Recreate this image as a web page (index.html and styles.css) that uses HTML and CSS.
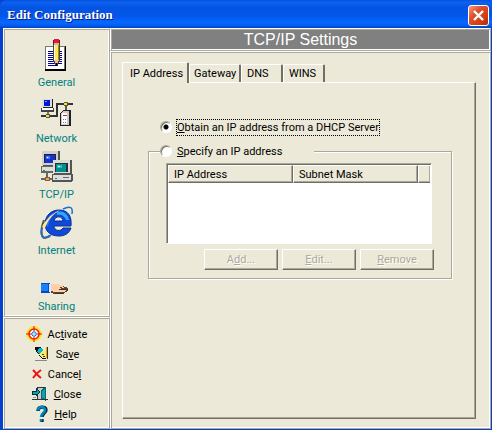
FILE: index.html
```html
<!DOCTYPE html>
<html lang="en">
<head>
<meta charset="utf-8">
<title>Edit Configuration</title>
<link rel="stylesheet" href="styles.css">
</head>
<body>
<div class="window">
  <header class="titlebar">
    <h1>Edit Configuration</h1>
    <button class="close" type="button" aria-label="Close window">
      <svg width="13" height="13" viewBox="0 0 13 13"><path d="M2 2 11 11M11 2 2 11" stroke="#fff" stroke-width="2.4"/></svg>
    </button>
  </header>
  <div class="body">
    <aside class="sidebar">
      <nav class="panel sections">
        <a href="#general">
          <svg width="32" height="32" viewBox="0 0 32 32" shape-rendering="crispEdges">
            <path d="M4 8h21v25H4z" fill="#000"/><path d="M4 8h20v23H4z" fill="#777"/><path d="M5 9h18v22H5z" fill="#fff"/>
            <path d="M7 13.500h14M7 15.500h14M7 17.500h14M7 19.500h14M7 21.500h14M7 23.500h14M7 25.500h14M7 27.500h10" stroke="#0000a8"/>
            <path d="M12 3h7v20l-3 5h-1l-3-5z" fill="#444"/><path d="M13 7h5v15h-5z" fill="#ffe84a"/><path d="M13 7h1v15h-1z" fill="#fff"/><path d="M17 7h1v15h-1z" fill="#a88600"/>
            <path d="M13 1h5v4h-5z" fill="#e21834"/><path d="M12 2h1v4h-1zM18 2h1v4h-1z" fill="#900020"/><path d="M13 5h5v2h-5z" fill="#bbb"/><path d="M13 22h5l-2 4h-1z" fill="#efc09a"/><path d="M15 25h1v3h-1z" fill="#000"/>
          </svg>
          <span>General</span></a>
        <a href="#network">
          <svg width="32" height="32" viewBox="0 0 32 32" shape-rendering="crispEdges">
            <path d="M0 22h16V10h16" fill="none" stroke="#333" stroke-width="1.500"/>
            <path d="M2 5h10v9H2z" fill="#222"/><path d="M1 5h10v8H1z" fill="#ddd"/><path d="M3 6h6v6H3z" fill="#0018d0"/><path d="M4 7h2v1H4z" fill="#78a8ff"/>
            <path d="M0 14h13v4H0z" fill="#444"/><path d="M1 14h11v2H1z" fill="#fff"/><path d="M6 18h2v4H6z" fill="#777"/>
            <path d="M5 20h4v4H5zM23 8h4v4h-4z" fill="#555"/><path d="M5 21h3v2H5zM23 9h3v2h-3z" fill="#ffe600"/>
            <path d="M25 12v6" stroke="#555" stroke-width="2"/>
            <path d="M22 16h8v16H19V19z" fill="#222"/><path d="M22 17h6v14h-8V20z" fill="#ccc"/><path d="M21 19h5v11h-5z" fill="#fff"/><path d="M22 21h4v1h-4z" fill="#e02020"/><path d="M22 25h1v1h-1zM24 25h1v1h-1zM22 28h1v1h-1zM24 28h1v1h-1z" fill="#777"/>
          </svg>
          <span>Network</span></a>
        <a href="#tcpip">
          <svg width="32" height="32" viewBox="0 0 32 32" shape-rendering="crispEdges">
            <path d="M2 1h17v15H2z" fill="#555"/><path d="M1 1h16v14H1z" fill="#d0d0c8"/><path d="M3 4h12v9H3z" fill="#223"/><path d="M4 5h10v8H4z" fill="#1830d0"/><path d="M5 6h4v3H5z" fill="#4080ff"/><path d="M6 7h1v1H6z" fill="#fff"/>
            <path d="M0 16h14v7H0z" fill="#666"/><path d="M1 17h12v4H1z" fill="#ddd"/><path d="M2 20h2v1H2z" fill="#0a0"/>
            <path d="M0 29h13M6 23v7" stroke="#666" stroke-width="2"/><path d="M4 27h5v4H4z" fill="#855"/><path d="M5 28h3v2H5z" fill="#ffb000"/>
            <path d="M13 10h18v14H13z" fill="#555"/><path d="M12 10h17v13H12z" fill="#dcdcd4"/><path d="M14 13h13v9H14z" fill="#233"/><path d="M15 14h10v8H15z" fill="#008e90"/><path d="M16 15h5v3h-5z" fill="#38b8b0"/><path d="M17 16h2v1h-2z" fill="#dff"/>
            <path d="M11 24h21v6l-2 2H11z" fill="#555"/><path d="M12 25h18v5H12z" fill="#ddd"/><path d="M14 28h2v1h-2z" fill="#0a0"/><path d="M22 27h6v1h-6z" fill="#666"/>
          </svg>
          <span>TCP/IP</span></a>
        <a href="#internet">
          <svg width="32" height="32" viewBox="0 0 32 32">
            <path d="M3 14C0 22-1 29 3 32c2 0 4-1 6-2" fill="none" stroke="#555" stroke-width="2"/>
            <path d="M30 20H13c0 5 7 6 9 2h8c-2 6-7 8-12 8C8 30 4 24 4 18 4 10 10 4 18 4c9 0 13 6 12 16zM13 15h9c0-5-8-6-9 0z" fill="#1048d8" stroke="#083098" fill-rule="evenodd"/>
            <path d="M16 6c6-2 11 2 12 8h-3c-1-4-5-6-9-5z" fill="#30a8f8"/><path d="M5 18c0-5 3-8 7-11-2 6-4 7-5 14z" fill="#3078f0"/>
            <path d="M1 21C5 13 13 6 19 4 11 9 7 14 4 22z" fill="#ffec90"/>
            <path d="M22 3c8-4 10-1 9 5M1 22c-2 9 1 12 9 7" fill="none" stroke="#1870d0" stroke-width="1.5"/>
          </svg>
          <span>Internet</span></a>
        <a href="#sharing">
          <svg width="32" height="32" viewBox="0 0 32 32" shape-rendering="crispEdges">
            <path d="M0 21h9v10H0z" fill="#0848c0"/><path d="M0 22h7v7H0z" fill="#1880ff"/>
            <path d="M9 23h5l7 1 6 2v2l-2 2-3 2h-9l-4-2z" fill="#6a4028"/><path d="M9 22h6l6 1 2 3-5-1 3 3 5-1-3 3h-8l-6-1z" fill="#ffd0a8"/>
            <path d="M18 27.500h9M14 31.500h9" stroke="#333"/><path d="M8 22h2v8H8z" fill="#dde8ff"/>
          </svg>
          <span>Sharing</span></a>
      </nav>
      <div class="panel actions">
        <button type="button">
          <svg width="16" height="16" viewBox="0 0 16 16"><circle cx="8" cy="8" r="7.500" fill="#ffe800"/><circle cx="8" cy="8" r="5" fill="#fff" stroke="#f02020" stroke-width="1.6"/><path d="M8 0v16M0 8h16" stroke="#e01010"/><circle cx="8" cy="8" r="2.5" fill="#1878c8"/><path d="M8 6v4M6 8h4" stroke="#fff"/></svg>
          <span>Ac<u>t</u>ivate</span></button>
        <button type="button">
          <svg width="16" height="16" viewBox="0 0 16 16" shape-rendering="crispEdges"><path d="M1 1h5l3 3 3 4v5H8L5 9 2 6z" fill="#111"/><path d="M5 2h2l2 2-4 4-2-2z" fill="#08b8c8"/><path d="M8 5h4v6l1 1H8L5 9z" fill="#ffec60"/><path d="M8 8h2v1H8zM9 10h2v1H9z" fill="#333"/><path d="M12 1h1v11h-1z" fill="#d8a800"/><path d="M13.500 1v12" stroke="#333"/><path d="M1 14.500h12" stroke="#888"/></svg>
          <span>Sa<u>v</u>e</span></button>
        <button type="button">
          <svg width="10" height="16" viewBox="0 0 10 16"><path d="M1 4C4 7 6 10 9 12M9 4C6 6 3 9 1 12" stroke="#f01010" stroke-width="2" fill="none"/></svg>
          <span>Cance<u>l</u></span></button>
        <button type="button">
          <svg width="16" height="16" viewBox="0 0 16 16" shape-rendering="crispEdges"><path d="M5 1h9v13H5z" fill="#333"/><path d="M6 2h6v11H6z" fill="#ccc"/><path d="m9 4 5-3v14l-5-2z" fill="#086878"/><path d="m10 5 3-2v10l-3-1z" fill="#10a0a8"/><path d="M0 5h4V2l4 4-4 4V8H0z" fill="#08a0b8" stroke="#033"/><path d="M0 13.500h16" stroke="#333"/><path d="M1 11.500h3" stroke="#999"/></svg>
          <span><u>C</u>lose</span></button>
        <button type="button">
          <svg width="12" height="16" viewBox="0 0 12 16"><path d="M2 5C2 0 10 0 10 4c0 3-4 3-4 7M6 13v3" fill="none" stroke="#024" stroke-width="3.4"/><path d="M2 4.500C2 0 9 0 9 4c0 3-4 3-4 7M5 13v2.500" fill="none" stroke="#0088b8" stroke-width="2.600"/></svg>
          <span><u>H</u>elp</span></button>
      </div>
    </aside>
    <main class="main">
      <h2 class="panel heading">TCP/IP Settings</h2>
      <section class="panel content">
        <div class="tabs" role="tablist">
          <button class="tab active" type="button" role="tab" aria-selected="true">IP Address</button>
          <button class="tab wide" type="button" role="tab">Gateway</button>
          <button class="tab" type="button" role="tab">DNS</button>
          <button class="tab" type="button" role="tab">WINS</button>
        </div>
        <div class="page" role="tabpanel">
          <div class="choice first">
            <input type="radio" name="mode" id="dhcp" checked>
            <label class="focus" for="dhcp"><u>O</u>btain an IP address from a DHCP Server</label>
          </div>
          <fieldset class="group">
            <legend class="choice">
              <input type="radio" name="mode" id="manual">
              <label for="manual"><u>S</u>pecify an IP address</label>
            </legend>
            <div class="list">
              <table>
                <thead><tr><th class="col">IP Address</th><th class="col">Subnet Mask</th><td></td></tr></thead>
              </table>
            </div>
            <div class="buttons">
              <button type="button" disabled>A<u>d</u>d...</button>
              <button type="button" disabled><u>E</u>dit...</button>
              <button type="button" disabled><u>R</u>emove</button>
            </div>
          </fieldset>
        </div>
      </section>
    </main>
  </div>
</div>
</body>
</html>
```
FILE: styles.css
```css
* { box-sizing: border-box; }

:root {
  --face: #ece9d8;
  --shade: #aca899;
  --dark: #716f64;
}

body {
  margin: 0;
  font: 11px/16px Roboto, "Liberation Sans", sans-serif;
  color: #000;
}

button {
  font: inherit;
  color: inherit;
  margin: 0;
  padding: 0;
  border: 0;
  background: none;
}

svg { display: block; flex: none; overflow: visible; }

u { text-underline-offset: 1px; }

.window {
  display: flex;
  flex-direction: column;
  min-height: 100vh;
  padding: 0 1px 1px 3px;
  background: #0842c8;
}

.titlebar {
  display: flex;
  align-items: center;
  justify-content: space-between;
  height: 28px;
  margin: 0 -1px 0 -3px;
  padding: 2px 3px 0 7px;
  border-radius: 6px 0 0 0;
  background: linear-gradient(#0a4fd8 0, #0a62f0 8%, #0554e4 25%, #0256e8 55%, #0668ff 80%, #0560f4 90%, #0342c0 100%);
}

.titlebar h1 {
  margin: 0;
  font: bold 13px/20px "Liberation Serif", "Times New Roman", serif;
  color: #fff;
  text-shadow: 1px 1px 0 #0a1883;
}

.close {
  display: grid;
  place-items: center;
  width: 21px;
  height: 21px;
  border: 1px solid #fff;
  border-radius: 3px;
  background: linear-gradient(135deg, #f0a080, #e0502c 35%, #d03c10 75%, #a82c08);
}

.body {
  flex: 1;
  display: grid;
  grid-template-columns: 107px 1fr;
}

.sidebar, .main { display: flex; flex-direction: column; }

.panel {
  border: 1px solid;
  border-color: #fff var(--shade) var(--shade) #fff;
  box-shadow: inset 1px 1px 0 var(--shade), inset -1px -1px 0 #fff;
  background: var(--face);
}

.sections {
  display: flex;
  flex-direction: column;
  padding: 9px 1px 0;
  height: 289px;
}

.sections a {
  display: flex;
  flex-direction: column;
  align-items: center;
  height: 56px;
  color: #008080;
  text-decoration: none;
}

.sections span { line-height: 26px; }

.actions {
  flex: 1;
  padding-top: 6px;
}

.actions button {
  display: flex;
  align-items: center;
  justify-content: center;
  gap: 6px;
  width: 100%;
  height: 20px;
}

.actions span { line-height: 18px; padding-top: 1px; }

.heading {
  margin: 0;
  height: 23px;
  background: #808080;
  color: #fff;
  font: 16px/21px "Liberation Sans", Arial, sans-serif;
  text-align: center;
}

.content {
  flex: 1;
  display: flex;
  flex-direction: column;
  padding: 10px 14px 9px 11px;
}

.tabs {
  display: flex;
  align-items: flex-end;
  height: 20px;
}

.tab {
  width: 42px;
  height: 18px;
  padding: 1px 0 0 5px;
  text-align: left;
  white-space: nowrap;
  border: solid;
  border-width: 1px 2px 0 1px;
  border-color: #fff var(--dark) #fff #fff;
  border-radius: 2px 2px 0 0;
}

.tab.wide { width: 52px; padding-left: 4px; }

.tab.active {
  width: 67px;
  height: 21px;
  margin-bottom: -1px;
  padding-left: 7px;
  z-index: 1;
  background: var(--face);
}

.page {
  flex: 1;
  padding: 36px 23px 0 25px;
  border: 1px solid;
  border-color: #fff var(--dark) var(--dark) #fff;
  box-shadow: inset -1px -1px 0 var(--shade);
}

.choice {
  display: flex;
  align-items: center;
  gap: 4px;
  height: 16px;
}

.choice.first { padding-left: 12px; margin-bottom: 8px; }

.choice label { padding: 1px 1px 0; }

.choice .focus { outline: 1px dotted #000; outline-offset: -1px; }

.choice input {
  appearance: none;
  flex: none;
  width: 12px;
  height: 12px;
  margin: 0;
  border: 1px solid;
  border-color: var(--shade) #fff #fff var(--shade);
  border-radius: 50%;
  background: #fff;
  box-shadow: inset 1px 1px 0 var(--dark);
}

.choice input:checked { background: radial-gradient(circle, #000 0 2px, #fff 3px); }

.group {
  min-width: 0;
  margin: 0;
  padding: 4px 17px 8px;
  border: 1px solid var(--shade);
  box-shadow: 1px 1px 0 #fff, inset 1px 1px 0 #fff;
}

.group legend {
  width: 154px;
  margin-left: -6px;
  padding: 0;
  background: var(--face);
}

.list {
  height: 81px;
  margin-right: 2px;
  border: 1px solid;
  border-color: var(--shade) #fff #fff var(--shade);
  box-shadow: inset 1px 1px 0 var(--dark);
  padding: 1px;
  background: #fff;
}

.list table {
  width: 100%;
  table-layout: fixed;
  border-collapse: separate;
  border-spacing: 0;
  background: var(--face);
}

.list th, .list td {
  height: 18px;
  padding: 1px 5px 0;
  border: 1px solid;
  border-color: #fff var(--dark) var(--dark) #fff;
  box-shadow: inset -1px -1px 0 var(--shade);
  font-weight: normal;
  line-height: 15px;
  text-align: left;
}

.list .col { width: 125px; }
.list td { border-right: 0; padding: 0; }

.buttons {
  display: flex;
  justify-content: flex-end;
  gap: 4px;
  margin-top: 5px;
}

.buttons button {
  width: 74px;
  height: 21px;
  padding-top: 1px;
  border: 1px solid;
  border-color: #fff var(--dark) var(--dark) #fff;
  box-shadow: inset -1px -1px 0 var(--shade);
  color: var(--shade);
  text-shadow: 1px 1px 0 #fff;
}
```
